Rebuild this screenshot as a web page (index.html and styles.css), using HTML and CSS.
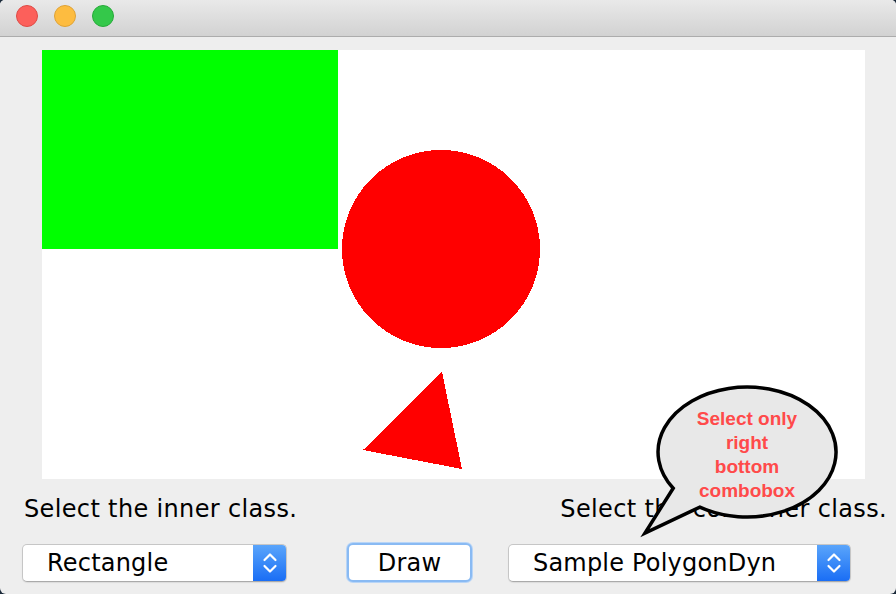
FILE: index.html
```html
<!DOCTYPE html>
<html>
<head>
<meta charset="utf-8">
<link rel="stylesheet" href="styles.css">
</head>
<body>
<div class="window">
  <div class="titlebar">
    <span class="light light-close"></span>
    <span class="light light-min"></span>
    <span class="light light-max"></span>
  </div>
  <div class="content">
    <div class="canvas">
      <svg class="shapes" width="823" height="429" viewBox="0 0 823 429">
        <rect x="0" y="0" width="296" height="199" fill="#00ff00"/>
        <circle cx="399" cy="199" r="99" fill="#ff0000"/>
        <polygon points="321,400 400,322 420,419" fill="#ff0000"/>
      </svg>
    </div>
    <div class="labels">
      <span class="label">Select the inner class.</span>
      <span class="label">Select the container class.</span>
    </div>
    <div class="controls">
      <div class="combo combo-left">
        <span class="combo-text">Rectangle</span>
        <span class="combo-arrow">
          <svg width="16" height="26" viewBox="0 0 16 26"><path d="M2.5 10 L8 4.5 L13.5 10 M2.5 16 L8 21.5 L13.5 16" fill="none" stroke="#fff" stroke-width="2.2" stroke-linecap="round" stroke-linejoin="round"/></svg>
        </span>
      </div>
      <button class="draw">Draw</button>
      <div class="combo combo-right">
        <span class="combo-text">Sample PolygonDyn</span>
        <span class="combo-arrow">
          <svg width="16" height="26" viewBox="0 0 16 26"><path d="M2.5 10 L8 4.5 L13.5 10 M2.5 16 L8 21.5 L13.5 16" fill="none" stroke="#fff" stroke-width="2.2" stroke-linecap="round" stroke-linejoin="round"/></svg>
        </span>
      </div>
    </div>
    <div class="bubble">
      <svg width="230" height="170" viewBox="0 0 230 170">
        <path d="M43.2,108.3 L15,153 L69.8,127.1 A89 65 0 1 0 43.2,108.3 Z" fill="#e8e8e8" stroke="#000" stroke-width="3.5" stroke-linejoin="miter"/>
      </svg>
      <div class="bubble-text">Select only<br>right<br>bottom<br>combobox</div>
    </div>
  </div>
</div>
</body>
</html>
```

FILE: styles.css
```css
html, body {
  margin: 0;
  padding: 0;
}
body {
  background: #1b2a3a;
  width: 896px;
  height: 594px;
  overflow: hidden;
  font-family: "DejaVu Sans", "Liberation Sans", sans-serif;
}
.window {
  width: 896px;
  height: 594px;
  background: #eeeeee;
  border-radius: 5px 5px 6px 6px;
  overflow: hidden;
  display: flex;
  flex-direction: column;
}
.titlebar {
  height: 36px;
  background: linear-gradient(#e9e9e9, #d2d2d2);
  border-bottom: 1px solid #acacac;
  display: flex;
  align-items: center;
  gap: 16px;
  padding-left: 16px;
  box-sizing: content-box;
  flex: none;
}
.light {
  width: 22px;
  height: 22px;
  border-radius: 50%;
  box-sizing: border-box;
  margin-top: -4px;
}
.light-close { background: #fc605b; border: 1px solid #de4a45; }
.light-min { background: #fdbc40; border: 1px solid #dea236; }
.light-max { background: #34c84a; border: 1px solid #27a93a; }
.content {
  position: relative;
  flex: 1;
  padding: 13px 31px 0 42px;
}
.canvas {
  width: 823px;
  height: 429px;
  background: #ffffff;
}
.shapes {
  display: block;
  shape-rendering: crispEdges;
}
.labels {
  display: flex;
  justify-content: space-between;
  margin-left: -18px;
  margin-right: -22px;
  margin-top: 15px;
  font-size: 24px;
  line-height: 30px;
  color: #000;
  letter-spacing: 0.35px;
}
.controls {
  display: flex;
  align-items: center;
  margin-left: -20px;
  margin-top: 19px;
}
.combo {
  height: 38px;
  box-sizing: border-box;
  background: #fff;
  border: 1px solid #c6c6c6;
  border-bottom-color: #aaaaaa;
  border-radius: 5px;
  display: flex;
  align-items: center;
  overflow: hidden;
  box-shadow: 0 1px 1px rgba(0,0,0,0.08);
}
.combo-left { width: 265px; }
.combo-right { width: 343px; margin-left: 36px; }
.combo-text {
  flex: 1;
  padding-left: 24px;
  font-size: 24px;
  letter-spacing: 0.2px;
  color: #000;
}
.combo-arrow {
  width: 33px;
  height: 100%;
  background: linear-gradient(#5aa5fb, #1a6ef5);
  display: flex;
  align-items: center;
  justify-content: center;
}
.draw {
  margin-left: 60px;
  width: 125px;
  height: 39px;
  box-sizing: border-box;
  background: #fff;
  border: 2px solid #89baf3;
  border-radius: 6px;
  box-shadow: 0 0 0 1px #b8d5f7;
  font-family: "DejaVu Sans", "Liberation Sans", sans-serif;
  font-size: 24px;
  letter-spacing: 0.2px;
  color: #000;
  padding: 0;
}
.bubble {
  position: absolute;
  left: 630px;
  top: 343px;
  width: 230px;
  height: 170px;
}
.bubble svg {
  display: block;
}
.bubble-text {
  position: absolute;
  left: 47px;
  top: 27px;
  width: 140px;
  text-align: center;
  font-family: "Liberation Sans", Arial, sans-serif;
  font-weight: bold;
  font-size: 19px;
  line-height: 24px;
  color: #ff4a4a;
}
```
